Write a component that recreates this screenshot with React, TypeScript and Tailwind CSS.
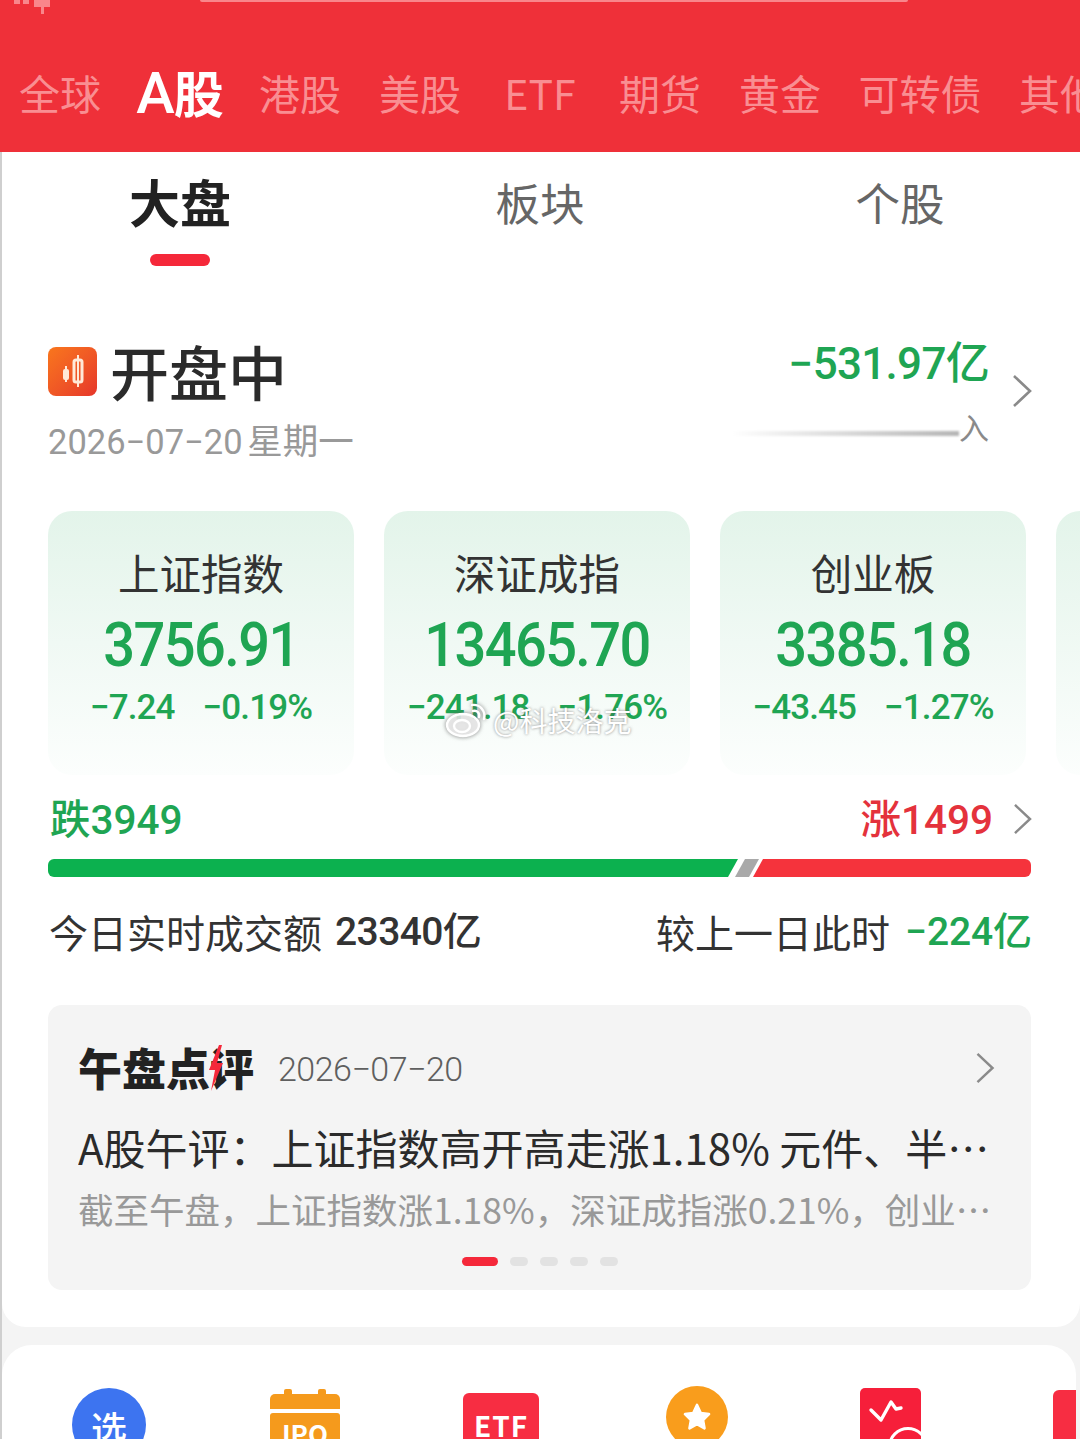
const cjk = "font-['Noto_Sans_CJK_SC','Noto_Sans',sans-serif]";
const num = "font-['Roboto','Noto_Sans_CJK_SC',sans-serif]";

function Chevron({ className }: { className: string }) {
  return (
    <svg viewBox="0 0 20 34" fill="none" stroke="#8a8a8a" strokeWidth="2.6" className={className}>
      <path d="M2 2 L18 17 L2 32" />
    </svg>
  );
}

const tabs = [
  { t: "全球", w: "w-[120px]" },
  { t: "A股", w: "w-[120px]", active: true },
  { t: "港股", w: "w-[120px]" },
  { t: "美股", w: "w-[120px]" },
  { t: "ETF", w: "w-[120px]" },
  { t: "期货", w: "w-[120px]" },
  { t: "黄金", w: "w-[120px]" },
  { t: "可转债", w: "w-[160px]" },
  { t: "其他", w: "w-[120px]" },
];

const cards = [
  { name: "上证指数", v: "3756.91", a: "−7.24", b: "−0.19%" },
  { name: "深证成指", v: "13465.70", a: "−241.18", b: "−1.76%" },
  { name: "创业板", v: "3385.18", a: "−43.45", b: "−1.27%" },
];

function Card({ name, v, a, b }: { name: string; v: string; a: string; b: string }) {
  return (
    <div className="flex h-[264px] w-[306px] shrink-0 flex-col items-center rounded-[24px] bg-gradient-to-b from-[#e3f4ea] via-[#f0f9f4] to-[#fcfefd] pt-[33px]">
      <div className="h-[56px] text-[41.5px] leading-[56px] text-[#333333]">{name}</div>
      <div className={`${num} mt-[12px] h-[66px] scale-y-[1.08] text-[56px] font-medium leading-[66px] tracking-[-1.6px] text-[#1fa553]`}>{v}</div>
      <div className={`${num} mt-[8px] flex h-[44px] gap-[28px] text-[35px] font-medium leading-[44px] tracking-[-0.9px] text-[#1fa553]`}>
        <span>{a}</span>
        <span>{b}</span>
      </div>
    </div>
  );
}

export default function App() {
  return (
    <div className={`${cjk} relative h-[1439px] w-[1080px] overflow-hidden bg-[#f4f4f4]`}>
      {/* Red header */}
      <div className="h-[152px] bg-[#ef3039]">
        <div className="flex h-[54px] items-start">
          <div className="ml-[14px] w-[186px]">
            <svg width="38" height="14" viewBox="0 0 38 14" fill="#f9868b">
              <rect x="0" y="0" width="6" height="4" />
              <rect x="9" y="0" width="6" height="4" />
              <rect x="20" y="0" width="16" height="7" />
              <rect x="27" y="0" width="3" height="14" />
            </svg>
          </div>
          <div className="h-[2px] w-[708px] rounded-b-[4px] bg-[#f9868b]" />
        </div>
        <div className="mt-[-1px] flex h-[80px] items-center whitespace-nowrap">
          {tabs.map((x) => (
            <div
              key={x.t}
              className={`${x.w} shrink-0 text-center ${
                x.active
                  ? "text-[50px] font-bold text-white"
                  : "text-[41px] text-[#f98e92]"
              }`}
            >
              {x.active ? (
                <>
                  <span className={`${num} text-[58px] font-medium tracking-[-1px]`}>A</span>股
                </>
              ) : (
                x.t
              )}
            </div>
          ))}
        </div>
      </div>

      <div className="h-[1287px] border-l-2 border-[#cfcfcf]">
        {/* Main card */}
        <div className="h-[1175px] rounded-b-[24px] bg-white">
          <div className="ml-[-2px] grid h-[114px] grid-cols-3 text-center">
            <div className="flex flex-col items-center">
              <div className="mt-[16px] h-[66px] text-[51px] font-bold leading-[66px] text-[#222222]">大盘</div>
              <div className="mt-[20px] h-[12px] w-[60px] rounded-full bg-[#f5283a]" />
            </div>
            <div className="mt-[20px] h-[60px] text-[44.5px] leading-[60px] text-[#666666]">板块</div>
            <div className="mt-[20px] h-[60px] text-[44.5px] leading-[60px] text-[#666666]">个股</div>
          </div>

          {/* Section head */}
          <div className="ml-[46px] mt-[72px] flex h-[138px] w-[984px] justify-between">
            <div>
              <div className="flex h-[66px] items-center gap-[13px]">
                <div className="flex h-[49px] w-[49px] items-center justify-center rounded-[8px] bg-gradient-to-br from-[#f9761c] to-[#e6352a]">
                  <svg width="30" height="38" viewBox="0 0 30 38" fill="none">
                    <path d="M8 14 V30" stroke="#ffe9d8" strokeWidth="2" />
                    <rect x="5" y="17" width="6" height="11" rx="2" fill="#ffe9d8" />
                    <path d="M20 3 V35" stroke="#ffe9d8" strokeWidth="2" />
                    <rect x="16" y="8" width="8" height="22" rx="2" stroke="#ffe9d8" strokeWidth="3" />
                  </svg>
                </div>
                <div className="text-[59px] font-medium leading-[66px] text-[#2b2b2b]">开盘中</div>
              </div>
              <div className={`${num} mt-[13px] text-[34.5px] leading-[44px] text-[#999999]`}>
                2026−07−20 <span className={`${cjk} ml-[-4px] text-[35.5px]`}>星期一</span>
              </div>
            </div>
            <div className="flex items-start">
              <div className="flex w-[257px] flex-col items-end">
                <div className={`${num} h-[52px] text-[44px] font-medium leading-[52px] tracking-[-0.7px] text-[#1fa553]`}>−531.97亿</div>
                <div className="mt-[16px] flex h-[40px] w-[257px] items-center">
                  <div className="mt-[14px] h-[5px] w-[229px] bg-gradient-to-r from-[#ffffff] to-[#b5b5b5] blur-[1px]" />
                  <div className="text-[30px] leading-[40px] text-[#8a8a8a]">入</div>
                </div>
              </div>
              <Chevron className="ml-[23px] mt-[36px] h-[34px] w-[20px]" />
            </div>
          </div>

          {/* Index cards */}
          <div className="ml-[46px] mt-[35px] flex gap-[30px] overflow-hidden">
            {cards.map((c) => (
              <Card key={c.name} {...c} />
            ))}
            <div className="h-[264px] w-[306px] shrink-0 rounded-[24px] bg-gradient-to-b from-[#e3f4ea] to-[#fcfefd]" />
          </div>

          {/* Breadth */}
          <div className="ml-[48px] mt-[16px] flex h-[56px] w-[982px] items-center justify-between text-[40.5px] font-medium">
            <div className={`${num} text-[#1fa553]`}>
              <span className={cjk}>跌</span>3949
            </div>
            <div className="flex items-center gap-[20px]">
              <div className={`${num} text-[#e4323c]`}>
                <span className={cjk}>涨</span>1499
              </div>
              <Chevron className="h-[32px] w-[19px]" />
            </div>
          </div>
          <div className="ml-[46px] mt-[12px] flex h-[18px] w-[983px] overflow-hidden rounded-[6px]">
            <div className="w-[690px] bg-[#0cb14f] [clip-path:polygon(0_0,100%_0,calc(100%-10px)_100%,0_100%)]" />
            <div className="ml-[-3px] w-[30px] bg-[#a9a9a9] [clip-path:polygon(10px_0,24px_0,14px_100%,0_100%)]" />
            <div className="ml-[-12px] flex-1 bg-[#f5333c] [clip-path:polygon(10px_0,100%_0,100%_100%,0_100%)]" />
          </div>

          {/* Turnover */}
          <div className="ml-[47px] mt-[26px] flex h-[56px] w-[983px] items-center justify-between text-[39px] text-[#333333]">
            <div className="flex items-center gap-[13px]">
              <span>今日实时成交额</span>
              <span className={`${num} mt-[2px] font-medium tracking-[-0.6px]`}>23340亿</span>
            </div>
            <div className="flex items-center gap-[15px]">
              <span>较上一日此时</span>
              <span className={`${num} mt-[2px] font-medium tracking-[-0.1px] text-[#1fa553]`}>−224亿</span>
            </div>
          </div>

          {/* Comment panel */}
          <div className="ml-[46px] mt-[46px] h-[285px] w-[983px] rounded-[14px] bg-[#f4f4f4] px-[30px]">
            <div className="flex h-[90px] items-center pt-[34px]">
              <div className="relative text-[44px] font-black leading-[60px] text-[#222222]">
                午盘点评
                <svg viewBox="0 0 16 46" className="absolute left-[130px] top-[8px] h-[46px] w-[16px]" fill="#f5283a">
                  <path d="M11 0 L1 25 H7 L3 46 L15 18 H9 L14 0 Z" />
                </svg>
              </div>
              <div className={`${num} ml-[24px] mt-[4px] text-[34px] font-light tracking-[-0.5px] text-[#5f5f5f]`}>2026−07−20</div>
              <Chevron className="ml-auto mr-[6px] mt-[2px] h-[32px] w-[20px]" />
            </div>
            <div className="mt-[22px] truncate whitespace-nowrap text-[42px] leading-[60px] text-[#2b2b2b]">
              A股午评：上证指数高开高走涨1.18% 元件、半导体板块领涨
            </div>
            <div className="mt-[2px] truncate whitespace-nowrap text-[35.5px] leading-[60px] text-[#999999]">
              截至午盘，上证指数涨1.18%，深证成指涨0.21%，创业板指涨1.05%
            </div>
            <div className="mt-[18px] flex justify-center gap-[12px]">
              <div className="h-[9px] w-[36px] rounded-full bg-[#f5283a]" />
              <div className="h-[9px] w-[18px] rounded-full bg-[#e2e2e2]" />
              <div className="h-[9px] w-[18px] rounded-full bg-[#e2e2e2]" />
              <div className="h-[9px] w-[18px] rounded-full bg-[#e2e2e2]" />
              <div className="h-[9px] w-[18px] rounded-full bg-[#e2e2e2]" />
            </div>
          </div>
        </div>

        {/* Shortcut card */}
        <div className="mr-[4px] mt-[18px] flex h-[200px] overflow-hidden rounded-t-[30px] bg-white pl-[9px] pt-[40px]">
          <div className="flex w-[196px] shrink-0 justify-center pt-[3px]">
            <div className="flex h-[74px] w-[74px] items-center justify-center rounded-full bg-[#3d74f0] pt-[4px] text-[36px] font-medium text-white">选</div>
          </div>
          <div className="flex w-[196px] shrink-0 justify-center pt-[9px]">
            <div className="w-[70px]">
              <div className="relative h-[15px] rounded-t-[5px] bg-[#f59a1c]">
                <div className="absolute left-[14px] top-[-5px] h-[6px] w-[8px] rounded-t-[2px] bg-[#f59a1c]" />
                <div className="absolute right-[14px] top-[-5px] h-[6px] w-[8px] rounded-t-[2px] bg-[#f59a1c]" />
              </div>
              <div className="mt-[4px] h-[60px] rounded-[3px] bg-[#f59a1c] pt-[3px] text-center text-[26px] font-bold leading-[34px] text-white">IPO</div>
            </div>
          </div>
          <div className="flex w-[196px] shrink-0 justify-center pt-[8px]">
            <div className="h-[70px] w-[76px] rounded-[6px] bg-[#f72d42] pt-[16px] text-center text-[28px] font-bold leading-[32px] tracking-[1px] text-white">ETF</div>
          </div>
          <div className="flex w-[196px] shrink-0 justify-center pt-[1px]">
            <div className="flex h-[62px] w-[62px] items-center justify-center rounded-full bg-[#f99d1c]">
              <svg width="32" height="32" viewBox="0 0 24 24" fill="white" stroke="white" strokeWidth="2" strokeLinejoin="round">
                <path d="M12 3 L14.8 9 L21 9.8 L16.5 14.2 L17.6 20.5 L12 17.4 L6.4 20.5 L7.5 14.2 L3 9.8 L9.2 9 Z" />
              </svg>
            </div>
          </div>
          <div className="flex w-[190px] shrink-0 justify-center pt-[3px]">
            <div className="relative h-[70px] w-[61px] overflow-hidden rounded-[5px] bg-[#f61f3a]">
              <svg width="61" height="40" viewBox="0 0 61 40" fill="none" stroke="white" strokeWidth="3.4" strokeLinejoin="round" strokeLinecap="round">
                <path d="M11 22 L21 32 L31 14 L36 21 L41 20" />
              </svg>
              <div className="absolute left-[28px] top-[39px] h-[40px] w-[40px] rounded-full border-[3px] border-white" />
            </div>
          </div>
          <div className="flex w-[196px] shrink-0 justify-start pl-[68px] pt-[5px]">
            <div className="relative h-[70px] w-[61px] shrink-0 overflow-hidden rounded-[6px] bg-[#f72d42]" />
          </div>
        </div>
      </div>

      {/* Watermark */}
      <div className="absolute left-[445px] top-[702px] flex items-center gap-[4px] text-[28px] leading-[36px] text-white [text-shadow:0_0_3px_rgba(90,90,90,0.75)]">
        <svg width="44" height="36" viewBox="0 0 44 36" fill="none" stroke="#ffffff" strokeWidth="2.4" className="drop-shadow-[0_0_2px_rgba(90,90,90,0.8)]">
          <ellipse cx="18" cy="23" rx="16" ry="11" fill="#ffffff" fillOpacity="0.75" />
          <ellipse cx="17" cy="24" rx="8" ry="6" />
          <path d="M27 3 C35 2 41 9 39 17 M28 9 C32 8 35 11 34 15" strokeLinecap="round" />
        </svg>
        <span>@科技洛克</span>
      </div>
    </div>
  );
}
